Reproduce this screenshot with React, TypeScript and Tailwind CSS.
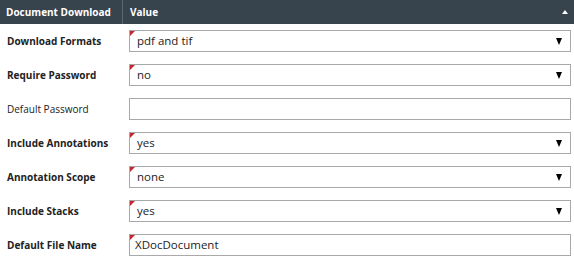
interface Row {
  label: string
  value: string
  kind: 'select' | 'text'
  bold: boolean
  flag: boolean
}

const ROWS: Row[] = [
  { label: 'Download Formats', value: 'pdf and tif', kind: 'select', bold: true, flag: true },
  { label: 'Require Password', value: 'no', kind: 'select', bold: true, flag: true },
  { label: 'Default Password', value: '', kind: 'text', bold: false, flag: false },
  { label: 'Include Annotations', value: 'yes', kind: 'select', bold: true, flag: true },
  { label: 'Annotation Scope', value: 'none', kind: 'select', bold: true, flag: true },
  { label: 'Include Stacks', value: 'yes', kind: 'select', bold: true, flag: true },
  { label: 'Default File Name', value: 'XDocDocument', kind: 'text', bold: true, flag: true },
]

export default function App() {
  return (
    <div className="h-[259px] w-[574px] overflow-hidden bg-white font-['Open_Sans',sans-serif] text-[10px] text-[#222]">
      {/* header */}
      <div className="flex h-6 bg-[#37434d] font-bold text-white">
        <div className="flex w-[123px] items-center border-r border-[#5b6670] pl-[6px]">
          Document Download
        </div>
        <div className="flex flex-1 items-center justify-between pl-[7px] pr-[6px]">
          <span>Value</span>
          <span className="h-0 w-0 border-x-[3.5px] border-b-[4px] border-x-transparent border-b-white" />
        </div>
      </div>

      {ROWS.map((r) => (
        <div key={r.label} className="flex h-[34px] items-center">
          <div className={`w-[124px] pl-[7px] ${r.bold ? 'font-bold' : ''}`}>{r.label}</div>
          <div className="relative ml-[5px] mr-[3px] flex h-[22px] flex-1 items-center justify-between border border-[#a9a9a9] pl-[7px] pr-[8px] text-[11.5px]">
            {r.flag && (
              <span className="absolute left-0 top-0 h-0 w-0 border-r-[5px] border-t-[5px] border-r-transparent border-t-[#c0282d]" />
            )}
            <span className={r.kind === 'text' ? '-ml-[2px]' : ''}>{r.value}</span>
            {r.kind === 'select' && (
              <span className="h-0 w-0 border-x-[3.5px] border-t-[7px] border-x-transparent border-t-black" />
            )}
          </div>
        </div>
      ))}
    </div>
  )
}
